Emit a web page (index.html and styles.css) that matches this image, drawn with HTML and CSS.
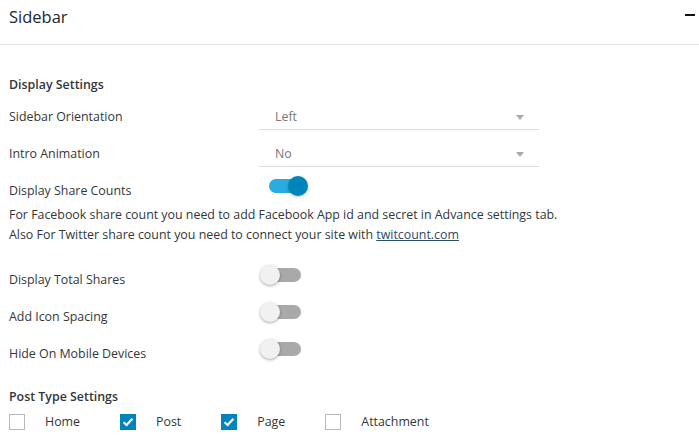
FILE: index.html
```html
<!DOCTYPE html>
<html>
<head>
<meta charset="utf-8">
<link rel="stylesheet" href="styles.css">
</head>
<body>
<div class="panel">
  <div class="panel-head">
    <h2 class="panel-title">Sidebar</h2>
    <span class="collapse"></span>
  </div>
  <div class="panel-body">
    <h3 class="section-title">Display Settings</h3>

    <div class="row row-first">
      <div class="label">Sidebar Orientation</div>
      <div class="select"><span>Left</span><i class="caret"></i></div>
    </div>
    <div class="row">
      <div class="label">Intro Animation</div>
      <div class="select"><span>No</span><i class="caret"></i></div>
    </div>
    <div class="row">
      <div class="label">Display Share Counts</div>
      <div class="toggle on"><span class="track"></span><span class="knob"></span></div>
    </div>
    <p class="desc">For Facebook share count you need to add Facebook App id and secret in Advance settings tab.<br>Also For Twitter share count you need to connect your site with <a href="#">twitcount.com</a></p>

    <div class="row row-after-desc">
      <div class="label">Display Total Shares</div>
      <div class="toggle"><span class="track"></span><span class="knob"></span></div>
    </div>
    <div class="row">
      <div class="label">Add Icon Spacing</div>
      <div class="toggle"><span class="track"></span><span class="knob"></span></div>
    </div>
    <div class="row">
      <div class="label">Hide On Mobile Devices</div>
      <div class="toggle"><span class="track"></span><span class="knob"></span></div>
    </div>

    <h3 class="section-title section-second">Post Type Settings</h3>
    <div class="checks">
      <label class="check"><span class="box"></span><span class="check-label">Home</span></label>
      <label class="check"><span class="box checked"><svg viewBox="0 0 16 16" width="16" height="16"><path d="M3.6 8.2 L6.6 11 L12.4 4.8" fill="none" stroke="#fff" stroke-width="2.2"/></svg></span><span class="check-label">Post</span></label>
      <label class="check"><span class="box checked"><svg viewBox="0 0 16 16" width="16" height="16"><path d="M3.6 8.2 L6.6 11 L12.4 4.8" fill="none" stroke="#fff" stroke-width="2.2"/></svg></span><span class="check-label">Page</span></label>
      <label class="check"><span class="box"></span><span class="check-label">Attachment</span></label>
    </div>
  </div>
</div>
</body>
</html>
```

FILE: styles.css
```css
* { box-sizing: border-box; }
html, body { margin: 0; padding: 0; background: #fff; }
body {
  font-family: "Open Sans", "Noto Sans", "Liberation Sans", sans-serif;
  font-size: 12.4px;
  color: #32373c;
  width: 699px;
  height: 444px;
  overflow: hidden;
}
.panel-head {
  height: 45px;
  border-bottom: 1px solid #e5e5e5;
  display: flex;
  justify-content: space-between;
  align-items: flex-start;
  padding: 0 4px 0 9px;
}
.panel-title {
  margin: 6px 0 0;
  font-size: 16.5px;
  font-weight: 400;
  line-height: 22px;
  color: #23282d;
}
.collapse {
  width: 10px;
  height: 2px;
  background: #111;
  margin-top: 14px;
}
.panel-body { padding: 30px 9px 0; }
.section-title {
  margin: 0;
  font-size: 12.4px;
  font-weight: 600;
  line-height: 20px;
  color: #32373c;
}
.section-second { margin-top: 23px; }
.row {
  display: flex;
  align-items: flex-start;
  height: 20px;
  margin-top: 17px;
}
.row-first { margin-top: 12px; }
.row-after-desc { margin-top: 25px; }
.label {
  width: 250px;
  line-height: 20px;
}
.select {
  width: 280px;
  position: relative;
  line-height: 20px;
  padding: 0 0 2px 16px;
  border-bottom: 1px solid #ddd;
  color: #777;
}
.caret {
  position: absolute;
  right: 15px;
  top: 8px;
  width: 0;
  height: 0;
  border-left: 4.5px solid transparent;
  border-right: 4.5px solid transparent;
  border-top: 5px solid #aaa;
}
.toggle {
  position: relative;
  width: 48px;
  height: 20px;
  margin-top: -5px;
}
.toggle .track {
  position: absolute;
  left: 9px;
  top: 3px;
  width: 33px;
  height: 14px;
  border-radius: 7px;
  background: #a9a9a9;
}
.toggle .knob {
  position: absolute;
  left: 1px;
  top: 0;
  width: 20px;
  height: 20px;
  border-radius: 50%;
  background: #f1f1f1;
  box-shadow: 0 1px 3px rgba(0,0,0,0.35);
}
.toggle.on .track { background: #2aace2; left: 10px; }
.toggle.on .knob { left: 29px; background: #0085ba; box-shadow: 0 1px 3px rgba(0,0,0,0.25); }
.desc {
  margin: 4px 0 0;
  line-height: 20px;
}
.desc a { color: #2c4a6e; text-decoration: underline; }
.checks {
  display: flex;
  align-items: center;
  margin-top: 5px;
  height: 20px;
}
.check {
  display: flex;
  align-items: center;
  margin-right: 40px;
}
.box {
  width: 16px;
  height: 16px;
  border: 1px solid #b4b9be;
  background: #fff;
  display: block;
  margin-top: -1px;
}
.box.checked { background: #0085ba; border-color: #0085ba; }
.box svg { display: block; margin: -1px; }
.check-label { margin-left: 20px; line-height: 20px; }
```
